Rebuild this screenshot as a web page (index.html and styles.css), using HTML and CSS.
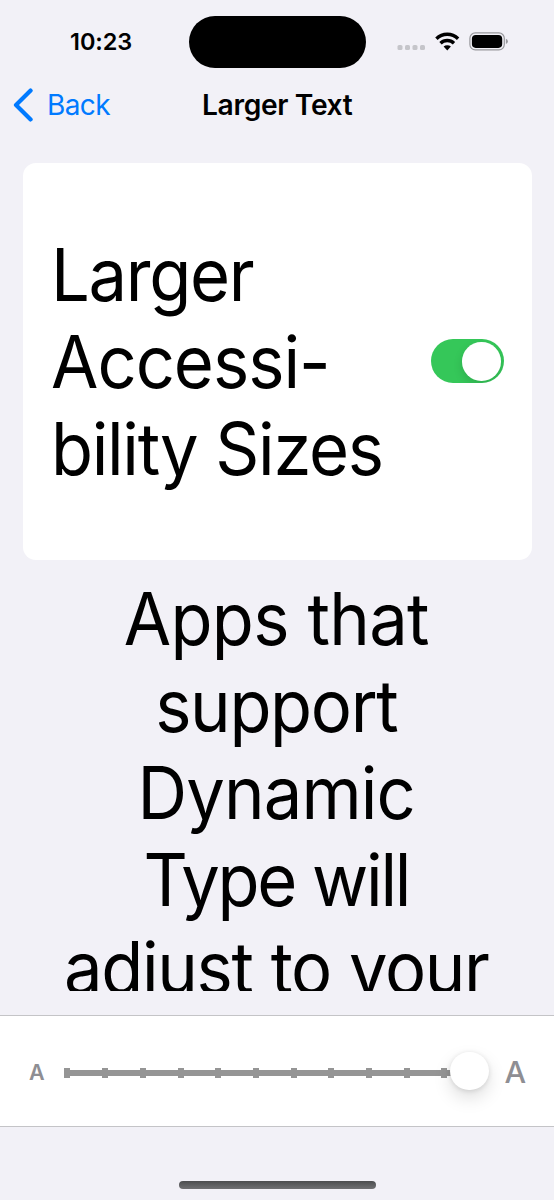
FILE: index.html
```html
<!DOCTYPE html>
<html lang="en">
<head>
<meta charset="utf-8">
<title>Larger Text</title>
<link rel="stylesheet" href="styles.css">
</head>
<body>
<div class="screen">
  <header class="status">
    <time class="clock">10:23</time>
    <div class="island"></div>
    <svg class="indicators" width="112" height="22" viewBox="0 0 112 22">
      <g fill="#c5c5ca">
        <rect x="0.5" y="14" width="5" height="5" rx="1.6"/>
        <rect x="8" y="14" width="5" height="5" rx="1.6"/>
        <rect x="15.5" y="14" width="5" height="5" rx="1.6"/>
        <rect x="23" y="14" width="5" height="5" rx="1.6"/>
      </g>
      <g fill="none" stroke="#000" stroke-width="3.4">
        <path d="M39.4 7.7a15.6 15.6 0 0 1 21.7 0"/>
        <path d="M43.5 12.2a9.8 9.8 0 0 1 13.5 0"/>
      </g>
      <path d="M46.6 15.6a5.3 5.3 0 0 1 7.3 0L50.25 19.4z"/>
      <rect x="72.9" y="1.9" width="34.4" height="17" rx="5.4" fill="none" stroke="#98989c" stroke-width="1.2"/>
      <rect x="74.9" y="3.9" width="30.3" height="13" rx="3.8"/>
      <path d="M108.9 7.7q2 .8 2 2.7t-2 2.7z" fill="#98989c"/>
    </svg>
  </header>
  <nav class="nav">
    <a class="back">
      <svg width="20" height="34" viewBox="0 0 20 34"><path d="M17.6 2.6L3 17l14.6 14.4" fill="none" stroke="#007aff" stroke-width="4.2" stroke-linecap="round" stroke-linejoin="round"/></svg>
      <span>Back</span>
    </a>
    <h1 class="title">Larger Text</h1>
  </nav>
  <main class="content">
    <section class="card">
      <div class="large label">
        <span class="line">Larger</span>
        <span class="line l-accessi">Accessi-</span>
        <span class="line">bility Sizes</span>
      </div>
      <div class="switch"><div class="thumb"></div></div>
    </section>
    <div class="large caption">
      <span class="line c-apps">Apps that</span>
      <span class="line">support</span>
      <span class="line c-dynamic">Dynamic</span>
      <span class="line c-type">Type will</span>
      <span class="line">adjust to your</span>
    </div>
  </main>
  <footer class="sizer">
    <span class="small-a">A</span>
    <div class="slider">
      <div class="track"></div>
      <div class="ticks"><i></i><i></i><i></i><i></i><i></i><i></i><i></i><i></i><i></i><i></i><i></i></div>
      <div class="knob"></div>
    </div>
    <span class="big-a">A</span>
  </footer>
  <div class="home"></div>
</div>
</body>
</html>
```
FILE: styles.css
```css
* { box-sizing: border-box; }
body { margin: 0; background: #f2f1f7; color: #000; font-family: Inter, "Liberation Sans", sans-serif; }
.screen { width: 554px; height: 1200px; display: flex; flex-direction: column; overflow: hidden; }

.status { height: 68px; flex: none; display: flex; padding-left: 70px; }
.clock { width: 119px; padding-top: 27px; font-size: 23.5px; line-height: 30px; font-weight: 600; letter-spacing: -0.05px; }
.island { width: 176.5px; height: 52px; margin-top: 16px; border-radius: 26px; background: #000; }
.indicators { margin: 31px 0 0 31.5px; }

.nav { height: 95px; flex: none; display: grid; grid-template-columns: 202px 1fr; align-items: start; padding-top: 20px; }
.back { display: flex; align-items: center; height: 34px; padding-left: 13px; gap: 14px; color: #007aff; font-size: 28px; letter-spacing: -0.6px; }
.title { margin: 0; font-size: 28.2px; line-height: 34px; font-weight: 600; letter-spacing: -0.35px; white-space: nowrap; }

.content { height: 828px; flex: none; padding: 0 22.5px 0 23px; overflow: hidden; }
.card { height: 396.5px; padding: 0 28px 0 28.3px; border-radius: 13px; background: #fff; display: flex; align-items: center; justify-content: space-between; }
.large { font-size: 72.3px; line-height: 87.33px; letter-spacing: -1.4px; font-weight: 420; }
.line { display: block; white-space: nowrap; }
.label { width: 350px; padding-top: 1px; transform: scaleX(.95); transform-origin: left; }
.caption { margin-top: 15px; padding-right: 2px; text-align: center; transform: scaleX(.95); }
.l-accessi { letter-spacing: -1.05px; }
.c-apps { letter-spacing: -0.7px; }
.c-dynamic { letter-spacing: -0.9px; }
.c-type { letter-spacing: -2.4px; }

.switch { width: 72.3px; height: 44px; flex: none; padding: 3px; border-radius: 22px; background: #35c759; display: flex; justify-content: flex-end; overflow: hidden; }
.thumb { width: 38.5px; height: 38.5px; border-radius: 50%; background: #fff; box-shadow: 0 4px 10px rgba(0, 0, 0, .13); }

.sizer { height: 112px; flex: none; margin-top: 24px; padding: 0 28px 0 29px; border-top: 1.3px solid #c4c4c7; border-bottom: 1.3px solid #c4c4c7; background: #fff; display: flex; align-items: center; color: #8e8e93; }
.small-a { width: 35.5px; padding-top: 1px; font-size: 21.5px; font-weight: 600; }
.big-a { padding-top: 1px; font-size: 30.5px; font-weight: 500; }
.slider { width: 425px; height: 39px; margin-right: 15.5px; display: grid; align-items: center; }
.slider > * { grid-area: 1 / 1; }
.track { height: 6px; width: 400px; margin-top: 4px; background: #959595; }
.ticks { width: 383px; margin-top: 4px; display: flex; justify-content: space-between; }
.ticks i { width: 6px; height: 10px; background: #959595; }
.knob { width: 38.5px; height: 38.5px; justify-self: end; border-radius: 50%; background: #fff; box-shadow: 0 8px 18px rgba(0, 0, 0, .13), 0 1px 5px rgba(0, 0, 0, .12); }

.home { width: 197.5px; height: 8px; margin: 54px 0 0 178.5px; border-radius: 4px; background: linear-gradient(#4c4d4f, #707073); }
```
